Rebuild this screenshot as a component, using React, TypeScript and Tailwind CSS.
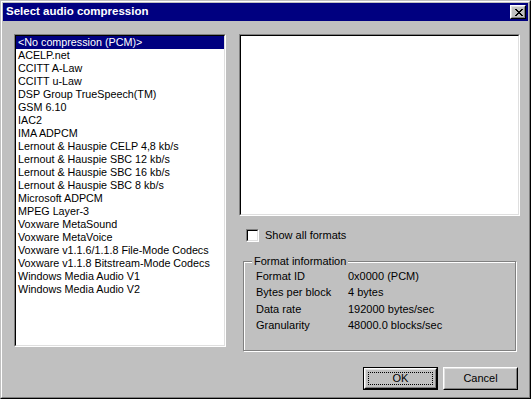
// Select audio compression — classic Win32 dialog

const CODECS = [
  '<No compression (PCM)>',
  'ACELP.net',
  'CCITT A-Law',
  'CCITT u-Law',
  'DSP Group TrueSpeech(TM)',
  'GSM 6.10',
  'IAC2',
  'IMA ADPCM',
  'Lernout & Hauspie CELP 4,8 kb/s',
  'Lernout & Hauspie SBC 12 kb/s',
  'Lernout & Hauspie SBC 16 kb/s',
  'Lernout & Hauspie SBC 8 kb/s',
  'Microsoft ADPCM',
  'MPEG Layer-3',
  'Voxware MetaSound',
  'Voxware MetaVoice',
  'Voxware v1.1.6/1.1.8 File-Mode Codecs',
  'Voxware v1.1.8 Bitstream-Mode Codecs',
  'Windows Media Audio V1',
  'Windows Media Audio V2',
]

const FORMAT_INFO = [
  { label: 'Format ID',       value: '0x0000 (PCM)' },
  { label: 'Bytes per block', value: '4 bytes' },
  { label: 'Data rate',       value: '192000 bytes/sec' },
  { label: 'Granularity',     value: '48000.0 blocks/sec' },
]

// ── Sunken 3D frame (listbox / edit / checkbox) ──────────────
function Sunken({ className, children }: { className: string; children?: React.ReactNode }) {
  return (
    <div className={`border border-t-[#808080] border-l-[#808080] border-r-white border-b-white ${className}`}>
      <div className="w-full h-full border border-t-black border-l-black border-r-[#dfdfdf] border-b-[#dfdfdf] bg-white overflow-hidden">
        {children}
      </div>
    </div>
  )
}

function CloseGlyph() {
  const rows = ['11000011', '01100110', '00111100', '00011000', '00111100', '01100110', '11000011']
  return (
    <svg width="8" height="7" viewBox="0 0 8 7" shapeRendering="crispEdges">
      {rows.flatMap((r, y) =>
        r.split('').map((c, x) => (c === '1' ? <rect key={`${x}-${y}`} x={x} y={y} width="1" height="1" fill="#000" /> : null)),
      )}
    </svg>
  )
}

function Button({ label, isDefault = false }: { label: string; isDefault?: boolean }) {
  return (
    <div className={`w-[75px] h-[23px] ${isDefault ? 'border border-black' : ''}`}>
      <div className="w-full h-full border border-t-white border-l-white border-r-black border-b-black">
        <div className="relative w-full h-full border border-t-[#dfdfdf] border-l-[#dfdfdf] border-r-[#808080] border-b-[#808080] flex items-center justify-center bg-[#c0c0c0]">
          <span className="text-[11px] text-black">{label}</span>
          {isDefault && <div className="absolute inset-[2px] border border-dotted border-black" />}
        </div>
      </div>
    </div>
  )
}

export default function App() {
  return (
    <div className="w-[531px] h-[399px] flex border border-t-[#c0c0c0] border-l-[#c0c0c0] border-r-black border-b-black bg-[#c0c0c0] font-['Liberation_Sans',Arial,sans-serif]">
      <div className="flex-1 flex flex-col p-px border border-t-white border-l-white border-r-[#808080] border-b-[#808080]">

        {/* Title bar */}
        <div className="h-[18px] bg-[#000080] flex items-center justify-between pl-[3px] pr-[2px]">
          <span className="text-[11.5px] font-bold text-white">Select audio compression</span>
          <div className="w-[16px] h-[14px] border border-t-white border-l-white border-r-black border-b-black">
            <div className="w-full h-full border border-t-[#dfdfdf] border-l-[#dfdfdf] border-r-[#808080] border-b-[#808080] bg-[#c0c0c0] flex items-center justify-center pl-px">
              <CloseGlyph />
            </div>
          </div>
        </div>

        {/* Body */}
        <div className="flex flex-col pl-[11px] pt-[13px]">
          <div className="flex gap-[13px]">

            {/* Codec list */}
            <Sunken className="w-[212px] h-[313px]">
              <div className="flex flex-col">
                {CODECS.map((c, i) => (
                  <div key={c}
                       className={`h-[13px] leading-[13px] pl-[2px] text-[10.75px] whitespace-nowrap ${i === 0 ? 'bg-[#000080] text-white' : 'text-black'}`}>
                    {c}
                  </div>
                ))}
              </div>
            </Sunken>

            {/* Right column */}
            <div className="w-[281px] flex flex-col">
              <Sunken className="w-[281px] h-[182px]" />

              <div className="flex items-center gap-[6px] mt-[11px] ml-[7px]">
                <Sunken className="w-[13px] h-[13px]" />
                <span className="text-[11px] text-black">Show all formats</span>
              </div>

              {/* Format information group */}
              <div className="relative ml-[4px] mt-[17px] w-[273px] h-[90px] border border-[#808080] shadow-[inset_1px_1px_0_#fff,1px_1px_0_#fff] pt-[6px] pl-[12px]">
                <span className="absolute -top-[7px] left-[8px] px-[2px] bg-[#c0c0c0] text-[11px] leading-[13px] text-black">
                  Format information
                </span>
                {FORMAT_INFO.map(r => (
                  <div key={r.label} className="flex h-[16.5px] items-center text-[11px] text-black">
                    <span className="w-[92px]">{r.label}</span>
                    <span>{r.value}</span>
                  </div>
                ))}
              </div>
            </div>
          </div>

          {/* Buttons */}
          <div className="flex justify-end gap-[5px] mt-[16px] mr-[10px]">
            <Button label="OK" isDefault />
            <Button label="Cancel" />
          </div>
        </div>
      </div>
    </div>
  )
}
